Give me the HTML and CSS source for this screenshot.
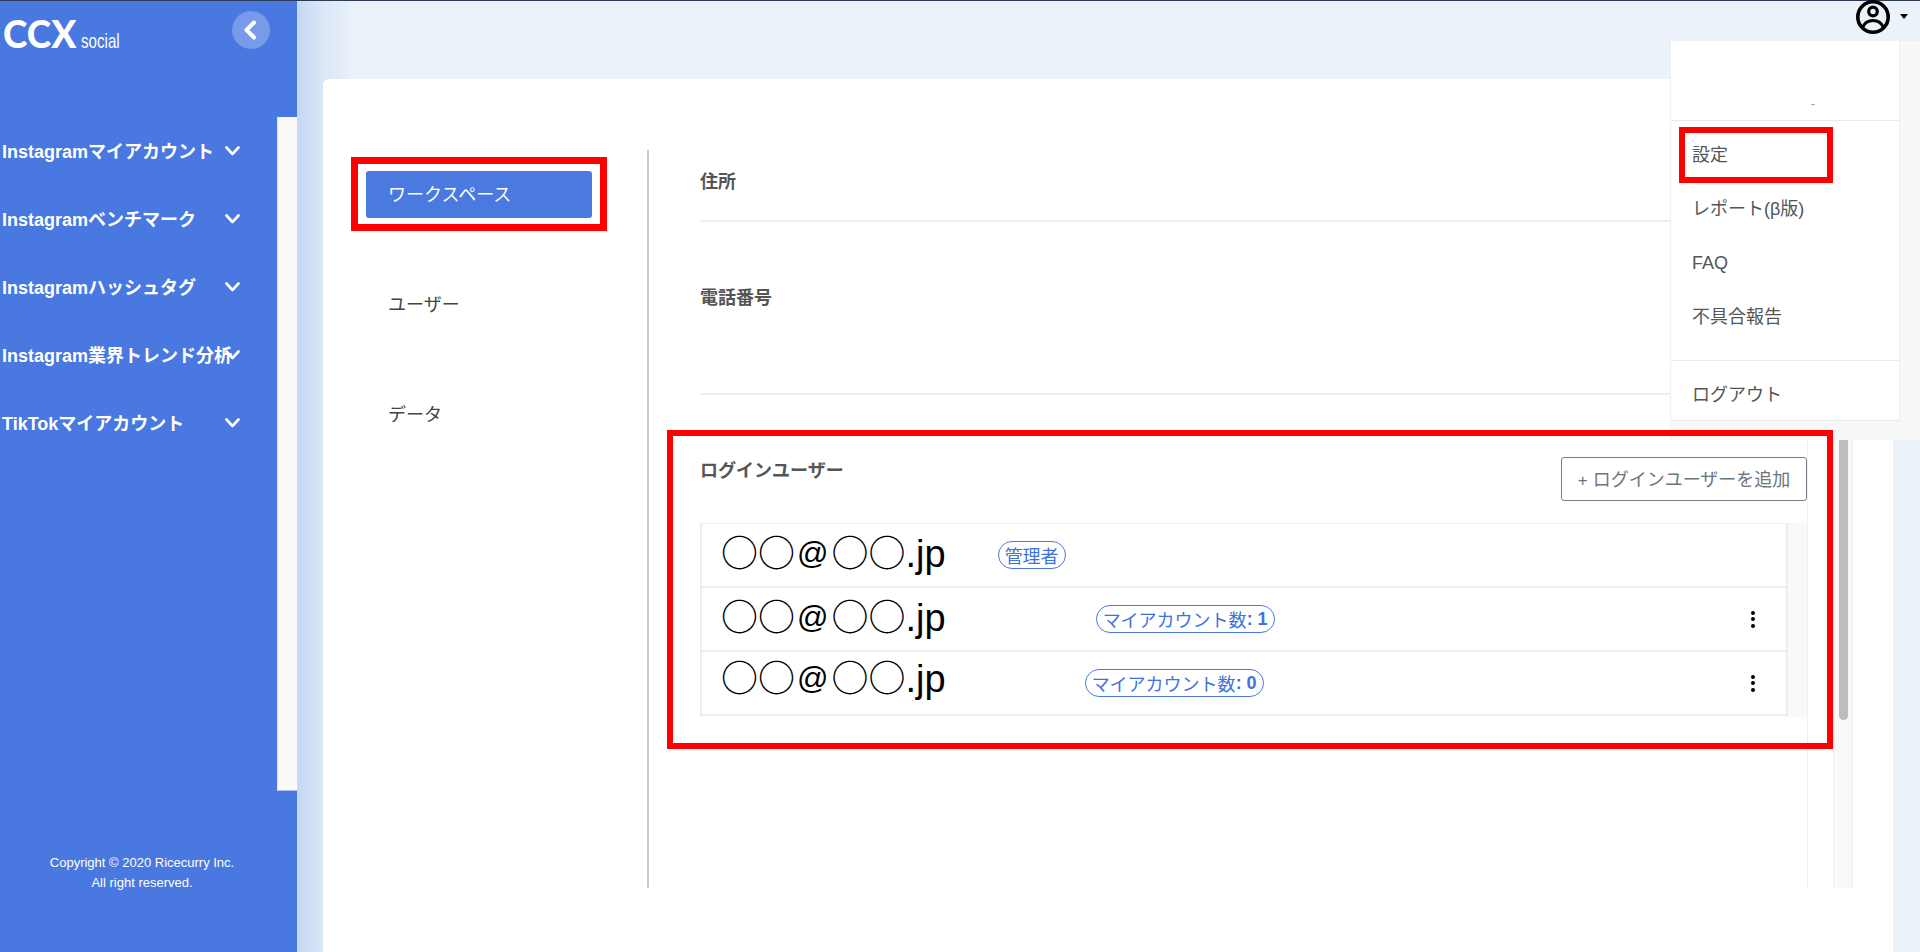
FILE: index.html
```html
<!DOCTYPE html>
<html lang="ja">
<head>
<meta charset="utf-8">
<title>CCX social</title>
<link rel="stylesheet" href="styles.css">
</head>
<body>
<div class="page">
  <aside class="sidebar">
    <div class="brand">
      <div class="logo"><span class="logo-main">CCX</span><span class="logo-sub">social</span></div>
      <button class="collapse" type="button" aria-label="閉じる">
        <svg width="14" height="20" viewBox="0 0 14 20"><path d="M11 2.5 3.5 10 11 17.5" fill="none" stroke="#fff" stroke-width="4" stroke-linecap="round" stroke-linejoin="round"/></svg>
      </button>
    </div>
    <div class="nav-wrap">
      <nav class="nav">
        <a class="nav-item"><span class="nav-text">Instagramマイアカウント</span><svg class="chev" width="15" height="10" viewBox="0 0 15 10"><path d="M1.5 1.5 7.5 8 13.5 1.5" fill="none" stroke="#fff" stroke-width="2.6" stroke-linecap="round" stroke-linejoin="round"/></svg></a>
        <a class="nav-item"><span class="nav-text">Instagramベンチマーク</span><svg class="chev" width="15" height="10" viewBox="0 0 15 10"><path d="M1.5 1.5 7.5 8 13.5 1.5" fill="none" stroke="#fff" stroke-width="2.6" stroke-linecap="round" stroke-linejoin="round"/></svg></a>
        <a class="nav-item"><span class="nav-text">Instagramハッシュタグ</span><svg class="chev" width="15" height="10" viewBox="0 0 15 10"><path d="M1.5 1.5 7.5 8 13.5 1.5" fill="none" stroke="#fff" stroke-width="2.6" stroke-linecap="round" stroke-linejoin="round"/></svg></a>
        <a class="nav-item"><span class="nav-text">Instagram業界トレンド分析</span><svg class="chev" width="15" height="10" viewBox="0 0 15 10"><path d="M1.5 1.5 7.5 8 13.5 1.5" fill="none" stroke="#fff" stroke-width="2.6" stroke-linecap="round" stroke-linejoin="round"/></svg></a>
        <a class="nav-item"><span class="nav-text">TikTokマイアカウント</span><svg class="chev" width="15" height="10" viewBox="0 0 15 10"><path d="M1.5 1.5 7.5 8 13.5 1.5" fill="none" stroke="#fff" stroke-width="2.6" stroke-linecap="round" stroke-linejoin="round"/></svg></a>
      </nav>
      <div class="nav-track"></div>
    </div>
    <footer class="copyright">Copyright © 2020 Ricecurry Inc.<br>All right reserved.</footer>
  </aside>

  <main class="main">
    <header class="topbar">
      <svg class="avatar" width="36" height="34" viewBox="0 0 36 34">
        <circle cx="18" cy="17" r="15.2" fill="none" stroke="#000" stroke-width="3.6"/>
        <circle cx="18" cy="11.500" r="4.3" fill="none" stroke="#000" stroke-width="3.2"/>
        <path d="M7.5 27.500C10 21.500 14 20.500 18 20.500S26 21.500 28.500 27.500" fill="none" stroke="#000" stroke-width="3.2"/>
      </svg>
      <span class="caret"></span>
    </header>

    <section class="card">
      <div class="tabs">
        <div class="tab-mark"><a class="tab tab-active">ワークスペース</a></div>
        <a class="tab tab-user">ユーザー</a>
        <a class="tab tab-data">データ</a>
      </div>
      <div class="pane">
        <div class="scroll">
          <div class="fields">
            <div class="field field-address"><h3 class="label">住所</h3></div>
            <div class="field field-phone"><h3 class="label">電話番号</h3></div>
            <div class="users">
              <div class="users-head">
                <h3 class="label label-users">ログインユーザー</h3>
                <button class="add" type="button"><span class="plus">+</span> ログインユーザーを追加</button>
              </div>
              <div class="user-box">
                <ul class="user-list">
                  <li class="user">
                    <span class="email"><span class="circ">○○</span><span class="at">@</span><span class="circ">○○</span>.jp</span>
                    <span class="badge badge-admin">管理者</span>
                  </li>
                  <li class="user">
                    <span class="email"><span class="circ">○○</span><span class="at">@</span><span class="circ">○○</span>.jp</span>
                    <span class="badge badge-one">マイアカウント数<b>: 1</b></span>
                    <span class="kebab"><i></i><i></i><i></i></span>
                  </li>
                  <li class="user">
                    <span class="email email-raised"><span class="circ">○○</span><span class="at">@</span><span class="circ">○○</span>.jp</span>
                    <span class="badge badge-zero">マイアカウント数<b>: 0</b></span>
                    <span class="kebab"><i></i><i></i><i></i></span>
                  </li>
                </ul>
                <div class="user-track"></div>
              </div>
            </div>
          </div>
        </div>
        <div class="track"><div class="thumb"></div></div>
      </div>
    </section>

    <div class="dropdown">
      <div class="menu">
        <div class="menu-head"><span class="menu-dash">-</span></div>
        <div class="menu-mark"><a class="menu-link">設定</a></div>
        <a class="menu-item menu-report">レポート(β版)</a>
        <a class="menu-item menu-faq">FAQ</a>
        <a class="menu-item menu-bug">不具合報告</a>
        <a class="menu-item menu-logout">ログアウト</a>
      </div>
    </div>
  </main>
</div>
</body>
</html>
```
FILE: styles.css
```css
* { box-sizing: border-box; }
html, body { margin: 0; height: 100%; overflow: hidden; }
body {
  font-family: "Liberation Sans", "Noto Sans CJK JP", sans-serif;
  color: #555;
  background: #e9f1f9;
}
h3, ul { margin: 0; padding: 0; }
li { list-style: none; }

.page {
  display: flex;
  height: 952px;
  border-top: 1px solid #2d3b55;
}

/* Sidebar */
.sidebar {
  flex: 0 0 297px;
  display: flex;
  flex-direction: column;
  background: #4878e0;
  color: #fff;
}
.brand {
  height: 116px;
  display: flex;
  justify-content: space-between;
  align-items: flex-start;
  padding: 10px 27px 0 3px;
}
.logo { display: flex; align-items: baseline; margin-top: 5px; line-height: 36px; }
.logo-main { font-family: "Lato", sans-serif; font-weight: 900; font-size: 37px; }
.logo-sub {
  display: inline-block;
  margin-left: 5px;
  font-size: 21px;
  transform: scaleX(.72);
  transform-origin: left center;
}
.collapse {
  width: 38px;
  height: 38px;
  padding: 0 2px 0 0;
  border: 0;
  border-radius: 50%;
  background: rgba(255, 255, 255, .26);
  display: flex;
  align-items: center;
  justify-content: center;
}
.nav-wrap { height: 674px; display: flex; }
.nav { width: 277px; padding: 0 37px 0 2px; }
.nav-item {
  height: 68px;
  display: flex;
  align-items: center;
  font-size: 18px;
  font-weight: 700;
}
.nav-text { flex: 1; min-width: 0; white-space: nowrap; margin-top: -2px; }
.chev { flex: none; }
.nav-track { width: 20px; background: #f9f9f9; border-left: 1px solid #dfe7f7; border-bottom: 1px solid #a9c0ee; }
.copyright {
  margin-top: 62px;
  padding-right: 13px;
  font-size: 13px;
  line-height: 20px;
  text-align: center;
}

/* Main */
.main {
  position: relative;
  flex: 1;
  min-width: 0;
  display: flex;
  flex-direction: column;
  background: linear-gradient(90deg, #c6d7f3 0, #dbe6f7 26px, #ebf2fa 60px);
}
.topbar {
  height: 78px;
  flex: none;
  display: flex;
  justify-content: flex-end;
  align-items: flex-start;
  gap: 9px;
  padding-right: 12px;
}
.avatar { display: block; margin-top: -1px; }
.caret {
  margin-top: 13px;
  width: 0;
  height: 0;
  border-left: 4.500px solid transparent;
  border-right: 4.500px solid transparent;
  border-top: 5px solid #000;
}

.card {
  flex: 1;
  min-height: 0;
  margin: 0 27px 0 26px;
  padding: 71px 40px 0 28px;
  display: flex;
  align-items: flex-start;
  background: #fff;
  border-radius: 6px 6px 0 0;
}
.tabs { flex: 0 0 296px; padding-top: 7px; font-size: 18px; color: #444; }
.tab { display: flex; align-items: center; line-height: 26px; padding-left: 37px; }
.tab-mark {
  width: 256px;
  height: 74px;
  border: 7px solid #f00;
  padding: 7px 8px;
}
.tab-active {
  height: 47px;
  padding: 0 0 0 22px;
  background: #4a7adf;
  color: #fff;
  border-radius: 3px;
}
.tab-user { margin-top: 61px; }
.tab-data { margin-top: 84px; }

.pane {
  flex: 1;
  height: 738px;
  display: flex;
  border-left: 2px solid #ccc;
}
.scroll { flex: 1; min-width: 0; padding: 0 25px 0 51px; }
.fields { height: 100%; border-right: 1px solid #f0f0f0; }
.label { font-size: 18px; line-height: 26px; font-weight: 700; color: #555; }
.label-users { margin-top: 2px; }
.field { border-bottom: 2px solid #eee; }
.field-address { height: 72px; padding-top: 19px; }
.field-phone { height: 173px; padding-top: 63px; }

.users {
  position: relative;
  z-index: 20;
  height: 319px;
  margin: 35px -26px 0 -33px;
  border: 6px solid #f00;
  padding: 20px 20px 0 27px;
}
.users-head { height: 45px; display: flex; justify-content: space-between; align-items: flex-start; }
.add {
  width: 246px;
  height: 44px;
  margin-top: 1px;
  padding: 0 0 2px;
  background: #fff;
  border: 1.5px solid #77808a;
  border-radius: 3px;
  font: inherit;
  font-size: 18px;
  color: #6c757d;
}
.plus { font-size: 17px; }
.user-box { display: flex; margin-top: 22px; height: 194px; }
.user-list { flex: 1; min-width: 0; border: solid #eee; border-width: 0 2px; border-top: 1px solid #eee; }
.user {
  height: 64px;
  display: flex;
  align-items: center;
  padding: 0 31px 0 19px;
  border-bottom: 2px solid #eee;
  color: #000;
}
.email { flex: 0 0 220px; margin-bottom: 5px; font-size: 38px; line-height: 44px; white-space: nowrap; }
.circ { font-family: "Noto Sans CJK JP", sans-serif; font-size: 37px; }
.at { font-size: 31px; margin: 0 3px 0 2px; vertical-align: 3px; }
.email-raised { margin-bottom: 12px; }
.badge {
  height: 28px;
  padding: 0 6px;
  display: flex;
  align-items: center;
  border: 1.5px solid #4a7adf;
  border-radius: 14px;
  background: #fff;
  color: #3f72dd;
  font-size: 18px;
  white-space: nowrap;
}
.badge b { font-weight: 700; }
.badge-admin { margin-left: 52px; }
.badge-one { margin-left: 150px; }
.badge-zero { margin-left: 139px; }
.kebab { margin-left: auto; display: flex; flex-direction: column; gap: 2.500px; }
.kebab i { width: 4px; height: 4px; border-radius: 50%; background: #000; }
.user-track { flex: 0 0 19px; background: #f9f9f9; }

.track {
  flex: 0 0 20px;
  padding: 0 4px 0 5px;
  background: #f9f9f9;
  border: solid #eee;
  border-width: 0 1px;
}
.thumb { height: 570px; background: #bdbdbd; border-radius: 0 0 5px 5px; }

/* Dropdown */
.dropdown {
  position: absolute;
  z-index: 10;
  top: 40px;
  right: 0;
  width: 250px;
  height: 399px;
  background: #f8f8f8;
  border-left: 1px solid #f0f0f0;
}
.menu {
  width: 229px;
  height: 380px;
  background: #fff;
  border-right: 1px solid #eceef0;
  border-bottom: 1px solid #e6e8ea;
  display: flex;
  flex-direction: column;
  font-size: 18px;
  color: #555;
}
.menu-head {
  height: 80px;
  flex: none;
  border-bottom: 1px solid #e8eaec;
  display: flex;
  justify-content: flex-end;
  align-items: flex-end;
  padding: 0 84px 10px 0;
}
.menu-dash { font-size: 13px; line-height: 12px; color: #999; }
.menu-mark {
  width: 154px;
  height: 56px;
  margin: 6px 0 -2px 8px;
  border: 6.500px solid #f00;
  padding-left: 7px;
  display: flex;
  align-items: center;
  flex: none;
}
.menu-link { line-height: 26px; }
.menu-item { height: 54px; flex: none; display: flex; align-items: center; padding-left: 21px; }
.menu-report { padding-bottom: 2px; }
.menu-faq { padding-top: 2px; }
.menu-bug { padding-bottom: 3px; }
.menu-logout {
  height: 60px;
  margin-top: 17px;
  padding-top: 5px;
  border-top: 1px solid #e8eaec;
}
```
